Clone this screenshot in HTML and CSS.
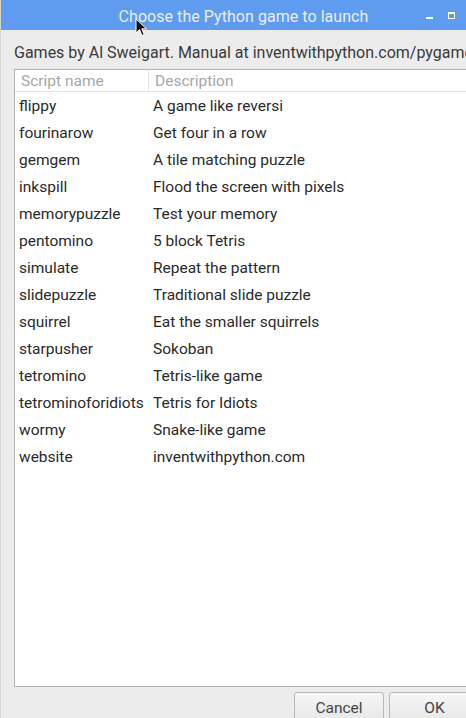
FILE: index.html
```html
<!DOCTYPE html>
<html>
<head>
<meta charset="utf-8">
<link rel="stylesheet" href="styles.css">
</head>
<body>
<div class="window">
  <div class="titlebar">
    <span class="title">Choose the Python game to launch</span>
    <div class="controls">
      <span class="ctl-min"></span>
      <span class="ctl-max"></span>
    </div>
  </div>
  <div class="content">
    <div class="label">Games by Al Sweigart. Manual at inventwithpython.com/pygame</div>
    <div class="listbox">
      <div class="header">
        <div class="hcell c1">Script name</div>
        <div class="hcell c2">Description</div>
      </div>
      <div class="rows">
        <div class="row"><span class="c1">flippy</span><span class="c2">A game like reversi</span></div>
        <div class="row"><span class="c1">fourinarow</span><span class="c2">Get four in a row</span></div>
        <div class="row"><span class="c1">gemgem</span><span class="c2">A tile matching puzzle</span></div>
        <div class="row"><span class="c1">inkspill</span><span class="c2">Flood the screen with pixels</span></div>
        <div class="row"><span class="c1">memorypuzzle</span><span class="c2">Test your memory</span></div>
        <div class="row"><span class="c1">pentomino</span><span class="c2">5 block Tetris</span></div>
        <div class="row"><span class="c1">simulate</span><span class="c2">Repeat the pattern</span></div>
        <div class="row"><span class="c1">slidepuzzle</span><span class="c2">Traditional slide puzzle</span></div>
        <div class="row"><span class="c1">squirrel</span><span class="c2">Eat the smaller squirrels</span></div>
        <div class="row"><span class="c1">starpusher</span><span class="c2">Sokoban</span></div>
        <div class="row"><span class="c1">tetromino</span><span class="c2">Tetris-like game</span></div>
        <div class="row"><span class="c1">tetrominoforidiots</span><span class="c2">Tetris for Idiots</span></div>
        <div class="row"><span class="c1">wormy</span><span class="c2">Snake-like game</span></div>
        <div class="row"><span class="c1">website</span><span class="c2">inventwithpython.com</span></div>
      </div>
    </div>
    <div class="buttons">
      <button class="btn cancel">Cancel</button>
      <button class="btn ok">OK</button>
    </div>
  </div>
  <svg class="cursor" width="14" height="20" viewBox="0 0 14 20">
    <path d="M1 1 L1 15 L4.5 11.5 L7 17.5 L9.2 16.6 L6.8 10.8 L11.5 10.8 Z" fill="#111" stroke="#fff" stroke-width="1"/>
  </svg>
</div>
</body>
</html>
```

FILE: styles.css
```css
html, body {
  margin: 0;
  padding: 0;
  width: 466px;
  height: 718px;
  overflow: hidden;
  background: #ececec;
  font-family: Roboto, "Liberation Sans", sans-serif;
}

.window {
  position: relative;
  width: 466px;
  height: 718px;
  display: flex;
  flex-direction: column;
  border-left: 1px solid #d4d4d4;
  box-sizing: border-box;
  overflow: hidden;
}

.titlebar {
  height: 30px;
  flex: none;
  background: #5f9bee;
  display: flex;
  align-items: center;
  justify-content: center;
  position: relative;
}

.title {
  color: #e8eefa;
  font-size: 16px;
  font-weight: 400;
  margin-left: 20px;
  margin-top: 2px;
  letter-spacing: 0.05px;
}

.controls {
  position: absolute;
  right: 0;
  top: 0;
  height: 30px;
  display: flex;
  align-items: center;
}

.ctl-min {
  width: 7px;
  height: 2px;
  background: #fff;
  margin-top: 5px;
  margin-right: 15px;
}

.ctl-max {
  width: 5px;
  height: 4px;
  border: 1px solid #fff;
  border-top-width: 2px;
  margin-right: 11px;
}

.content {
  flex: none;
  display: flex;
  flex-direction: column;
  padding: 13px 0 0 13px;
}

.label {
  flex: none;
  font-size: 16px;
  color: #3a3a3a;
  white-space: nowrap;
  height: 26px;
  line-height: 20px;
}

.listbox {
  background: #fff;
  border: 1px solid #b2b2b2;
  border-right: none;
  height: 618px;
  box-sizing: border-box;
  flex: none;
  margin-right: -20px;
}

.header {
  display: flex;
  height: 22px;
  border-bottom: 1px solid #e4e4e4;
  box-sizing: border-box;
}

.hcell {
  font-size: 15.5px;
  color: #a8a8a8;
  line-height: 22px;
}

.header .c1 {
  width: 134px;
  border-right: 1px solid #e4e4e4;
}

.header .c2 {
  padding-left: 6px;
}

.c1 {
  width: 133px;
  padding-left: 6px;
  box-sizing: border-box;
  flex: none;
}

.rows {
  padding-top: 1px;
}

.row {
  display: flex;
  height: 27px;
  line-height: 27px;
  font-size: 15.5px;
  color: #2a2a2a;
  white-space: nowrap;
}

.row .c1 {
  padding-left: 4px;
}

.row .c2 {
  padding-left: 5px;
}

.buttons {
  flex: none;
  display: flex;
  justify-content: flex-end;
  gap: 5px;
  padding-top: 5px;
  margin-right: -14px;
}

.btn {
  font-family: Roboto, "Liberation Sans", sans-serif;
  font-size: 15.5px;
  color: #444;
  height: 32px;
  border: 1px solid #b8b8b8;
  border-radius: 3px;
  background: linear-gradient(#f6f6f6, #e6e6e6);
  padding: 0;
  line-height: 28px;
}

.cancel {
  width: 90px;
}

.ok {
  width: 91px;
}

.cursor {
  position: absolute;
  left: 134px;
  top: 18px;
}
```
